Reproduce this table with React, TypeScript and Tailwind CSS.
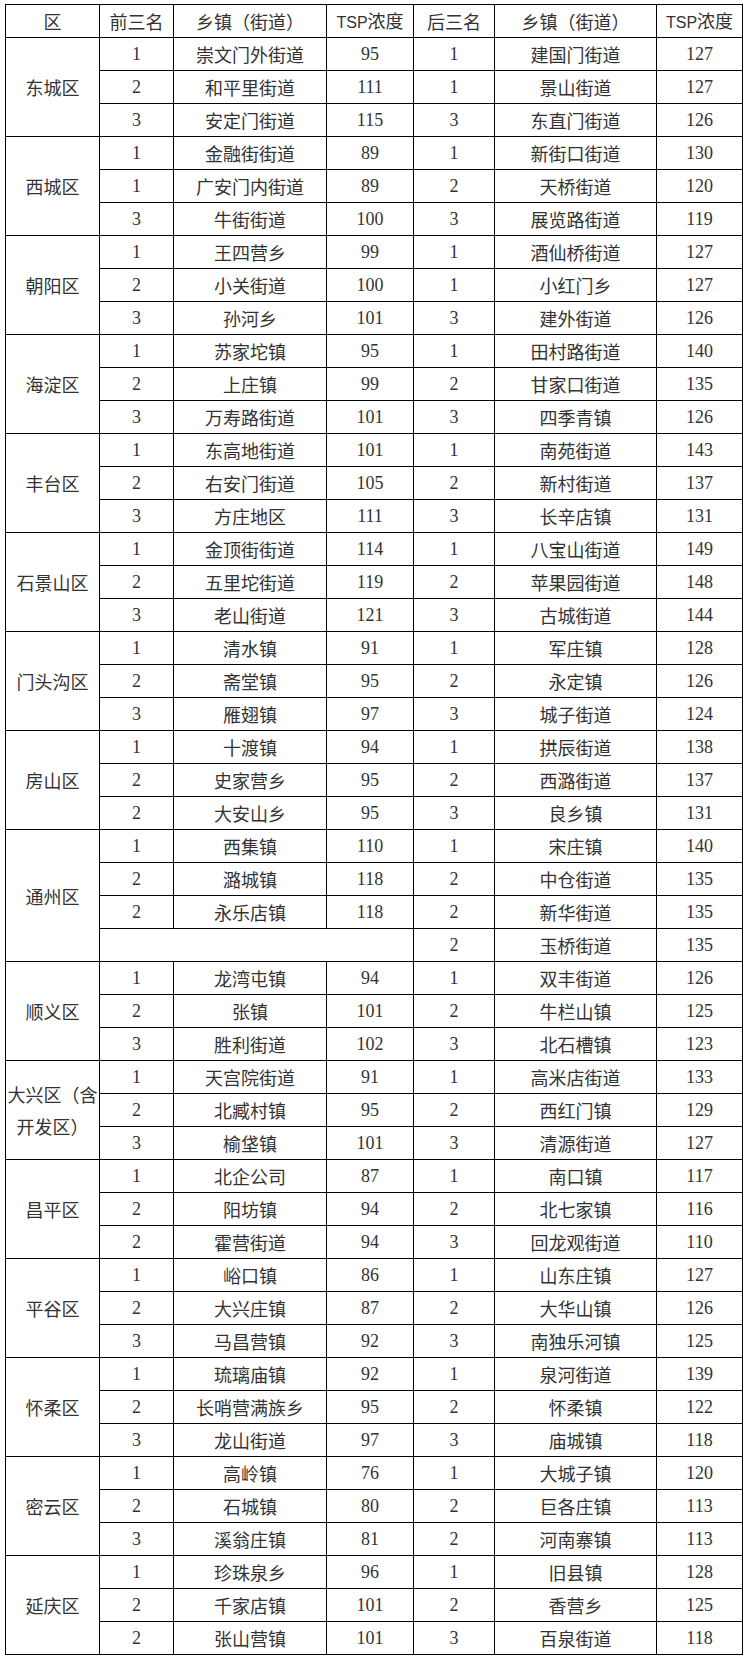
type Row = [string, string, string, string, string, string];

interface District {
  name: string;
  rows: Row[];
}

const DISTRICTS: District[] = [
  { name: '东城区', rows: [
    ['1', '崇文门外街道', '95', '1', '建国门街道', '127'],
    ['2', '和平里街道', '111', '1', '景山街道', '127'],
    ['3', '安定门街道', '115', '3', '东直门街道', '126'],
  ] },
  { name: '西城区', rows: [
    ['1', '金融街街道', '89', '1', '新街口街道', '130'],
    ['1', '广安门内街道', '89', '2', '天桥街道', '120'],
    ['3', '牛街街道', '100', '3', '展览路街道', '119'],
  ] },
  { name: '朝阳区', rows: [
    ['1', '王四营乡', '99', '1', '酒仙桥街道', '127'],
    ['2', '小关街道', '100', '1', '小红门乡', '127'],
    ['3', '孙河乡', '101', '3', '建外街道', '126'],
  ] },
  { name: '海淀区', rows: [
    ['1', '苏家坨镇', '95', '1', '田村路街道', '140'],
    ['2', '上庄镇', '99', '2', '甘家口街道', '135'],
    ['3', '万寿路街道', '101', '3', '四季青镇', '126'],
  ] },
  { name: '丰台区', rows: [
    ['1', '东高地街道', '101', '1', '南苑街道', '143'],
    ['2', '右安门街道', '105', '2', '新村街道', '137'],
    ['3', '方庄地区', '111', '3', '长辛店镇', '131'],
  ] },
  { name: '石景山区', rows: [
    ['1', '金顶街街道', '114', '1', '八宝山街道', '149'],
    ['2', '五里坨街道', '119', '2', '苹果园街道', '148'],
    ['3', '老山街道', '121', '3', '古城街道', '144'],
  ] },
  { name: '门头沟区', rows: [
    ['1', '清水镇', '91', '1', '军庄镇', '128'],
    ['2', '斋堂镇', '95', '2', '永定镇', '126'],
    ['3', '雁翅镇', '97', '3', '城子街道', '124'],
  ] },
  { name: '房山区', rows: [
    ['1', '十渡镇', '94', '1', '拱辰街道', '138'],
    ['2', '史家营乡', '95', '2', '西潞街道', '137'],
    ['2', '大安山乡', '95', '3', '良乡镇', '131'],
  ] },
  { name: '通州区', rows: [
    ['1', '西集镇', '110', '1', '宋庄镇', '140'],
    ['2', '潞城镇', '118', '2', '中仓街道', '135'],
    ['2', '永乐店镇', '118', '2', '新华街道', '135'],
    ['', '', '', '2', '玉桥街道', '135'],
  ] },
  { name: '顺义区', rows: [
    ['1', '龙湾屯镇', '94', '1', '双丰街道', '126'],
    ['2', '张镇', '101', '2', '牛栏山镇', '125'],
    ['3', '胜利街道', '102', '3', '北石槽镇', '123'],
  ] },
  { name: '大兴区（含开发区）', rows: [
    ['1', '天宫院街道', '91', '1', '高米店街道', '133'],
    ['2', '北臧村镇', '95', '2', '西红门镇', '129'],
    ['3', '榆垡镇', '101', '3', '清源街道', '127'],
  ] },
  { name: '昌平区', rows: [
    ['1', '北企公司', '87', '1', '南口镇', '117'],
    ['2', '阳坊镇', '94', '2', '北七家镇', '116'],
    ['2', '霍营街道', '94', '3', '回龙观街道', '110'],
  ] },
  { name: '平谷区', rows: [
    ['1', '峪口镇', '86', '1', '山东庄镇', '127'],
    ['2', '大兴庄镇', '87', '2', '大华山镇', '126'],
    ['3', '马昌营镇', '92', '3', '南独乐河镇', '125'],
  ] },
  { name: '怀柔区', rows: [
    ['1', '琉璃庙镇', '92', '1', '泉河街道', '139'],
    ['2', '长哨营满族乡', '95', '2', '怀柔镇', '122'],
    ['3', '龙山街道', '97', '3', '庙城镇', '118'],
  ] },
  { name: '密云区', rows: [
    ['1', '高岭镇', '76', '1', '大城子镇', '120'],
    ['2', '石城镇', '80', '2', '巨各庄镇', '113'],
    ['3', '溪翁庄镇', '81', '2', '河南寨镇', '113'],
  ] },
  { name: '延庆区', rows: [
    ['1', '珍珠泉乡', '96', '1', '旧县镇', '128'],
    ['2', '千家店镇', '101', '2', '香营乡', '125'],
    ['2', '张山营镇', '101', '3', '百泉街道', '118'],
  ] },
];

// row height is fixed by the tr; keep line boxes short so nothing grows it
const cell = 'border border-black text-center align-middle px-px py-0 leading-[28px]';
const cjk = "font-['Noto_Sans_CJK_SC',sans-serif]";
const num = "font-['Liberation_Serif','Noto_Sans_CJK_SC',serif]";

export default function App() {
  return (
    <div className="bg-white min-h-[1661px] pt-[4px] pl-[5px]">
      <table className="table-fixed border-collapse w-[738px] text-[18px] text-[#333]">
        <colgroup>
          <col className="w-[94px]" />
          <col className="w-[74px]" />
          <col className="w-[153px]" />
          <col className="w-[87px]" />
          <col className="w-[81px]" />
          <col className="w-[162px]" />
          <col className="w-[86px]" />
        </colgroup>
        <thead>
          <tr className="h-[33px]">
            {['区', '前三名', '乡镇（街道）', 'TSP浓度', '后三名', '乡镇（街道）', 'TSP浓度'].map((h, i) => (
              <th key={i} className={`${cell} ${cjk} font-normal`}>
                {h.startsWith('TSP') ? (
                  <><span className="font-['Liberation_Sans',sans-serif] text-[16px]">TSP</span>浓度</>
                ) : h}
              </th>
            ))}
          </tr>
        </thead>
        <tbody>
          {DISTRICTS.map((d) =>
            d.rows.map((r, i) => (
              <tr key={d.name + i} className="h-[33px]">
                {i === 0 && (
                  <td rowSpan={d.rows.length} className={`${cell} ${cjk} !leading-[32px]`}>{d.name}</td>
                )}
                {r[1] === '' ? (
                  <td colSpan={3} className={cell}></td>
                ) : (
                  <>
                    <td className={`${cell} ${num}`}>{r[0]}</td>
                    <td className={`${cell} ${cjk}`}>{r[1]}</td>
                    <td className={`${cell} ${num}`}>{r[2]}</td>
                  </>
                )}
                <td className={`${cell} ${num}`}>{r[3]}</td>
                <td className={`${cell} ${cjk}`}>{r[4]}</td>
                <td className={`${cell} ${num}`}>{r[5]}</td>
              </tr>
            ))
          )}
        </tbody>
      </table>
    </div>
  );
}
